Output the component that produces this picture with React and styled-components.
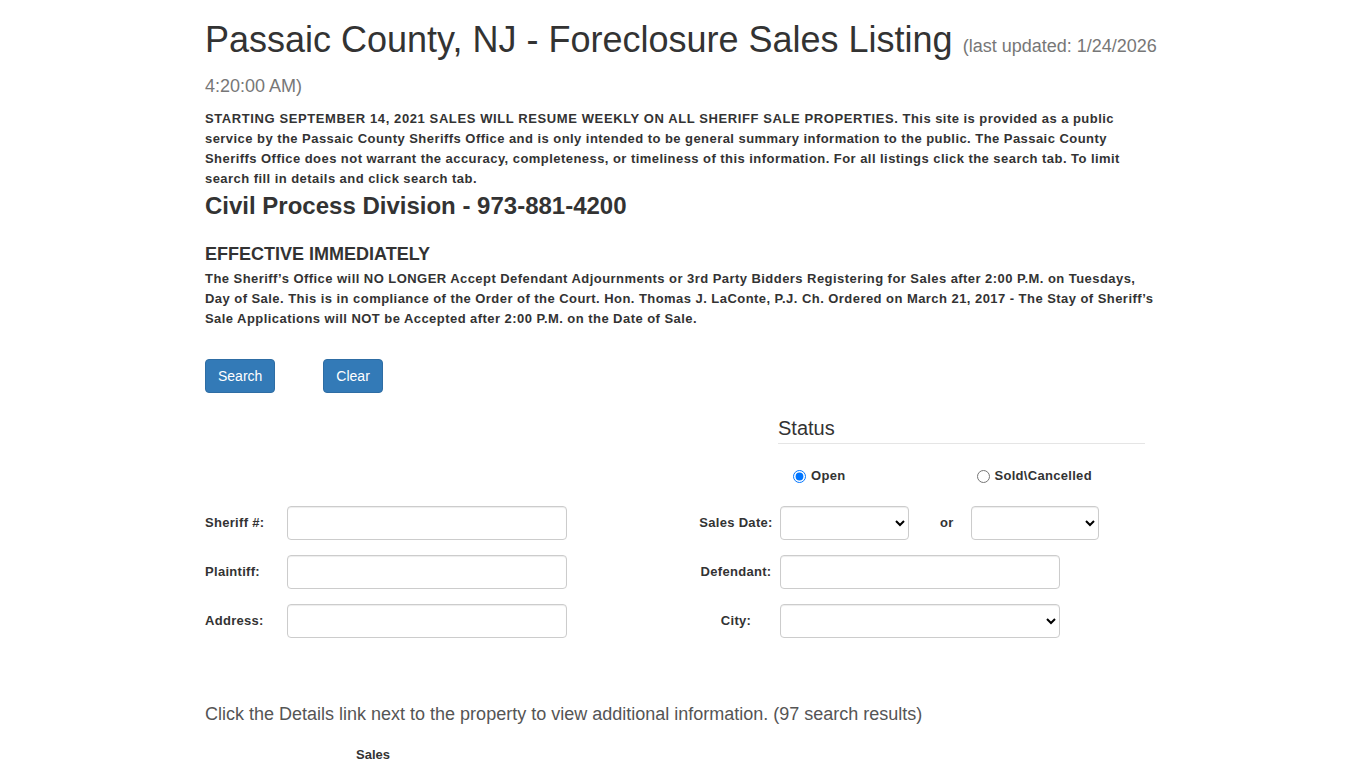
import React from "react";
import styled, { createGlobalStyle } from "styled-components";

const Global = createGlobalStyle`
  html, body { margin: 0; padding: 0; background: #fff; }
  body {
    font-family: "Liberation Sans", Arial, Helvetica, sans-serif;
    color: #333;
    font-size: 14px;
    line-height: 1.42857;
  }
  * { box-sizing: border-box; }
`;

const Page = styled.div`
  width: 956px;
  margin-left: 205px;
`;

const Title = styled.h1`
  font-size: 36px;
  font-weight: 500;
  line-height: 1.1;
  margin: 20px 0 10px;
  color: #333;
`;

const Updated = styled.small`
  font-size: 18px;
  color: #777;
  font-weight: 400;
`;

const Notice = styled.p`
  font-size: 13px;
  font-weight: 700;
  line-height: 20px;
  letter-spacing: 0.45px;
  margin: 0;
  color: #333;
`;

const Caps = styled.span`
  letter-spacing: 0.6px;
`;

const Division = styled.h3`
  font-size: 24px;
  font-weight: 700;
  line-height: 26px;
  margin: 4px 0 25px;
`;

const Effective = styled.h4`
  font-size: 18px;
  font-weight: 700;
  line-height: 20px;
  margin: 0 0 5px;
`;

const ButtonRow = styled.div`
  display: flex;
  gap: 48px;
  margin-top: 30px;
`;

const Button = styled.button`
  font-family: inherit;
  font-size: 14px;
  line-height: 20px;
  padding: 6px 12px;
  height: 34px;
  color: #fff;
  background: #337ab7;
  border: 1px solid #2e6da4;
  border-radius: 4px;
  cursor: pointer;
`;

const StatusWrap = styled.div`
  margin: 24px 0 0 573px;
  width: 367px;
`;

const StatusTitle = styled.h4`
  font-size: 20px;
  font-weight: 500;
  line-height: 22px;
  margin: 0;
  padding-bottom: 4px;
  border-bottom: 1px solid #e5e5e5;
`;

const RadioRow = styled.div`
  display: grid;
  grid-template-columns: 1fr 1fr;
  margin-top: 22px;
`;

const RadioLabel = styled.label`
  display: flex;
  align-items: center;
  gap: 2px;
  padding-left: 12px;
  font-size: 13px;
  font-weight: 700;
  line-height: 20px;
  letter-spacing: 0.3px;

  input {
    margin: 0 3px 0 3px;
    width: 13px;
    height: 13px;
  }
`;

const FormGrid = styled.div`
  display: grid;
  grid-template-columns: 82px 280px 128px 82px 1fr;
  grid-auto-rows: 34px;
  row-gap: 15px;
  margin-top: 20px;
  align-items: center;
`;

const FieldLabel = styled.label`
  font-size: 13px;
  font-weight: 700;
  letter-spacing: 0.3px;
  text-align: ${(p) => (p.$center ? "center" : "left")};
  grid-column: ${(p) => p.$col};
`;

const TextInput = styled.input`
  height: 34px;
  width: ${(p) => p.$w || 280}px;
  padding: 6px 12px;
  border: 1px solid #ccc;
  border-radius: 4px;
  box-shadow: inset 0 1px 1px rgba(0, 0, 0, 0.075);
  font-family: inherit;
  font-size: 14px;
  grid-column: ${(p) => p.$col};
`;

const Select = styled.select`
  height: 34px;
  width: ${(p) => p.$w}px;
  padding: 6px 8px;
  border: 1px solid #ccc;
  border-radius: 4px;
  box-shadow: inset 0 1px 1px rgba(0, 0, 0, 0.075);
  background: #fff;
  font-family: inherit;
  font-size: 14px;
`;

const Controls = styled.div`
  grid-column: 5;
  display: flex;
  align-items: center;
  padding-left: 3px;
`;

const Or = styled.span`
  font-size: 13px;
  font-weight: 700;
  letter-spacing: 0.3px;
  width: 62px;
  padding-left: 31px;
`;

const Info = styled.p`
  font-size: 18px;
  line-height: 20px;
  color: #555;
  margin: 66px 0 0;
`;

const Table = styled.table`
  border-collapse: collapse;
  margin-top: 21px;
`;

const Th = styled.th`
  font-size: 13px;
  font-weight: 700;
  line-height: 20px;
  text-align: center;
  vertical-align: top;
  width: ${(p) => p.$w}px;
  padding: 0;
`;

export default function App() {
  return (
    <>
      <Global />
      <Page>
        <Title>
          Passaic County, NJ - Foreclosure Sales Listing{" "}
          <Updated>(last updated: 1/24/2026 4:20:00 AM)</Updated>
        </Title>
        <Notice>
          <Caps>STARTING SEPTEMBER 14, 2021 SALES WILL RESUME WEEKLY ON ALL SHERIFF SALE PROPERTIES.</Caps> This site is provided as a public service by the Passaic County Sheriffs Office and is only intended to be general summary information to the public. The Passaic County Sheriffs Office does not warrant the accuracy, completeness, or timeliness of this information. For all listings click the search tab. To limit search fill in details and click search tab.
        </Notice>
        <Division>Civil Process Division - 973-881-4200</Division>
        <Effective>EFFECTIVE IMMEDIATELY</Effective>
        <Notice>
          The Sheriff’s Office will NO LONGER Accept Defendant Adjournments or 3rd Party Bidders Registering for Sales after 2:00 P.M. on Tuesdays, Day of Sale. This is in compliance of the Order of the Court. Hon. Thomas J. LaConte, P.J. Ch. Ordered on March 21, 2017 - The Stay of Sheriff’s Sale Applications will NOT be Accepted after 2:00 P.M. on the Date of Sale.
        </Notice>

        <ButtonRow>
          <Button type="button">Search</Button>
          <Button type="button">Clear</Button>
        </ButtonRow>

        <StatusWrap>
          <StatusTitle>Status</StatusTitle>
          <RadioRow>
            <RadioLabel>
              <input type="radio" name="status" defaultChecked />
              Open
            </RadioLabel>
            <RadioLabel>
              <input type="radio" name="status" />
              Sold\Cancelled
            </RadioLabel>
          </RadioRow>
        </StatusWrap>

        <FormGrid>
          <FieldLabel $col={1}>Sheriff #:</FieldLabel>
          <TextInput $col={2} />
          <FieldLabel $col={4} $center>Sales Date:</FieldLabel>
          <Controls>
            <Select $w={129}><option></option></Select>
            <Or>or</Or>
            <Select $w={128}><option></option></Select>
          </Controls>

          <FieldLabel $col={1}>Plaintiff:</FieldLabel>
          <TextInput $col={2} />
          <FieldLabel $col={4} $center>Defendant:</FieldLabel>
          <Controls>
            <TextInput />
          </Controls>

          <FieldLabel $col={1}>Address:</FieldLabel>
          <TextInput $col={2} />
          <FieldLabel $col={4} $center>City:</FieldLabel>
          <Controls>
            <Select $w={280}><option></option></Select>
          </Controls>
        </FormGrid>

        <Info>
          Click the Details link next to the property to view additional information. (97 search results)
        </Info>

        <Table>
          <thead>
            <tr>
              <Th $w={110}></Th>
              <Th $w={116}>Sales<br />Date</Th>
              <Th $w={200}></Th>
            </tr>
          </thead>
        </Table>
      </Page>
    </>
  );
}
